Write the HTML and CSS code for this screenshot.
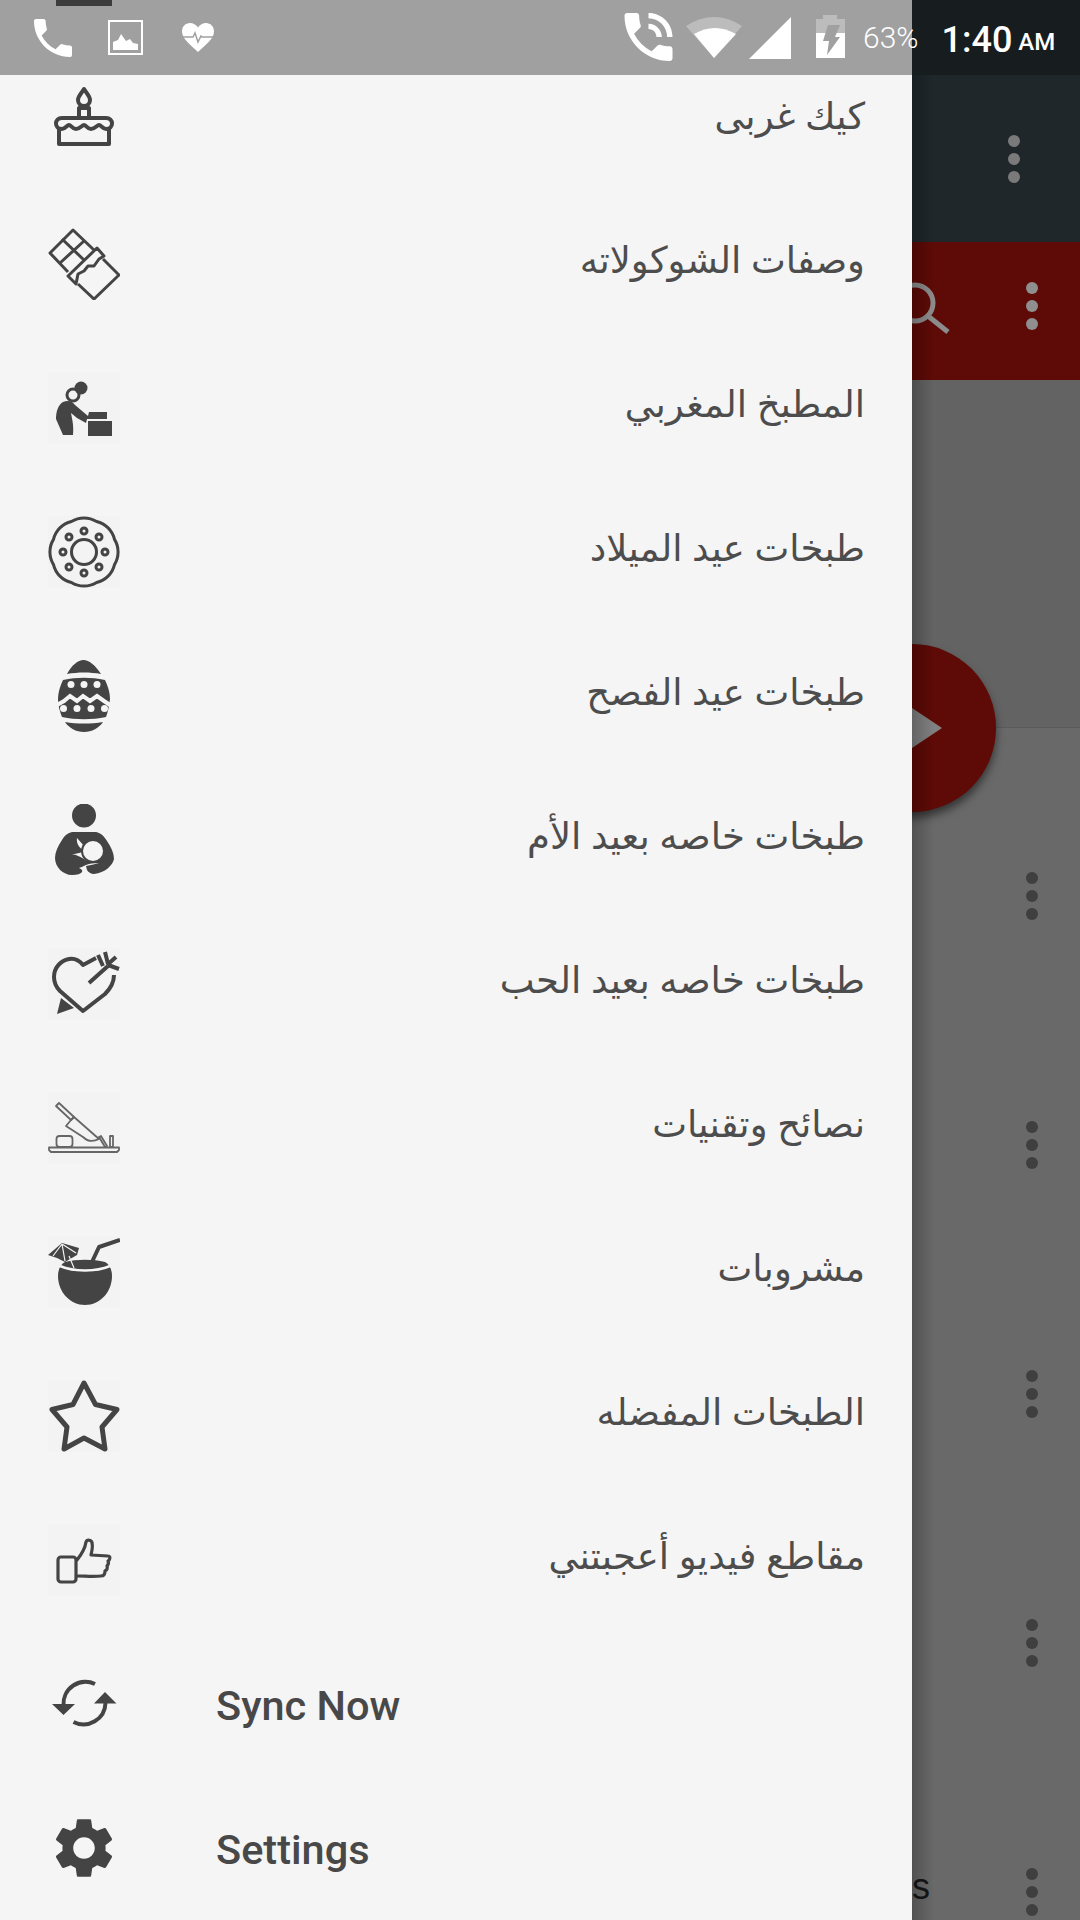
FILE: index.html
```html
<!DOCTYPE html>
<html lang="ar">
<head>
    <meta charset="UTF-8">
    <meta name="viewport" content="width=device-width, initial-scale=1.0">
    <title>Drawer</title>
    <link rel="stylesheet" href="styles.css">
</head>
<body>
    <div class="status-bar" dir="ltr">
        <div class="peek"></div>
        <svg class="st-phone" viewBox="3 3 18 18"><path d="M6.62 10.79c1.44 2.83 3.76 5.14 6.59 6.59l2.2-2.2c.27-.27.67-.36 1.02-.24 1.12.37 2.33.57 3.57.57.55 0 1 .45 1 1V20c0 .55-.45 1-1 1-9.39 0-17-7.61-17-17 0-.55.45-1 1-1h3.5c.55 0 1 .45 1 1 0 1.25.2 2.45.57 3.57.11.35.03.74-.25 1.02l-2.2 2.2z"/></svg>
        <svg class="st-image" viewBox="0 0 35 35"><path class="st-outline" d="M1 1h33v33H1z"/><path d="M5 30v-8l5-2 3-6 5 7 4-2 3 4 5 1v6z"/></svg>
        <svg class="st-heart" viewBox="0 0 32 29"><path d="M16 29C9 22 0 16 0 8.500 0 3.500 3.500 0 8 0c3.200 0 6 1.700 8 4.500C18 1.700 20.800 0 24 0c4.500 0 8 3.500 8 8.500C32 16 23 22 16 29z"/><path class="st-pulse" d="M0 14h11l2-4 3 9 3-6 1 1h12"/></svg>
        <svg class="st-call" viewBox="3 3 18 18"><path d="M20 15.500c-1.250 0-2.450-.2-3.570-.57-.35-.11-.74-.03-1.020.24l-2.200 2.200c-2.830-1.440-5.150-3.750-6.590-6.590l2.200-2.210c.28-.26.36-.65.25-1C8.700 6.450 8.500 5.250 8.500 4c0-.55-.45-1-1-1H4c-.55 0-1 .45-1 1 0 9.390 7.610 17 17 17 .55 0 1-.45 1-1v-3.500c0-.55-.45-1-1-1zM19 12h2c0-4.970-4.030-9-9-9v2c3.870 0 7 3.130 7 7zm-4 0h2c0-2.760-2.240-5-5-5v2c1.660 0 3 1.340 3 3z"/></svg>
        <svg class="st-wifi" viewBox="0 0 56 41"><path class="st-dim" d="M0 9Q28-9 56 9L28 41z"/><path d="M8 17Q29 5 50 17L28 41z"/></svg>
        <svg class="st-signal" viewBox="0 0 42 42"><path d="M42 0v42H0z"/></svg>
        <svg class="st-battery" viewBox="0 0 29 43"><path class="st-dim" d="M7 0h14v4h8v14H0V4h7z"/><path d="M0 18h29v25H0z"/><path class="st-bolt" d="M12 10h12l-5 12h5L11 40l2-14H7z"/></svg>
        <span class="st-level">63%</span>
        <span class="st-time">1:40</span>
        <span class="st-ampm">AM</span>
    </div>

    <nav class="drawer">
        <div class="row">
            <svg class="icon" viewBox="0 0 72 72"><g class="line"><path d="M36 5c-3 5-6 7-6 11a6 6 0 0 0 12 0c0-4-3-6-6-11z"/><path d="M31 33v-9h10v9"/><path d="M14 34h44c8 0 8 11 0 11-3 0-5-4-7-4s-4 4-8 4-5-4-7-4-4 4-8 4-5-4-7-4-4 4-7 4c-8 0-8-11 0-11z"/><path d="M11 44v16h50V44"/></g></svg>
            <span class="label">كيك غربى</span>
        </div>
        <div class="row">
            <svg class="icon" viewBox="0 0 72 72"><g class="line thin"><path d="M20 44 2 25 25 2 46 22"/><path d="M14 11l22 21M36 13 12 35"/><path d="M20 48 49 20l7 8-5 3-5 7-6 0-4 5-6 3-2 10z"/><path d="M30 56 46 71 71 47 55 31"/></g></svg>
            <span class="label">وصفات الشوكولاته</span>
        </div>
        <div class="row">
            <svg class="icon tint" viewBox="0 0 72 72"><circle class="line thin" cx="25" cy="23" r="6"/><circle class="solid" cx="33" cy="16" r="6.500"/><path class="solid" d="M15 30c5-2 9-1 12 3l13 11 1-4h18v7H39l-1 4-9-5-6-5c1 6 3 12 2 22H15L8 47c0-7 2-14 7-17z"/><path class="solid" d="M40 49h24v15H40z"/></svg>
            <span class="label">المطبخ المغربي</span>
        </div>
        <div class="row">
            <svg class="icon tint" viewBox="0 0 72 72"><g class="line thin"><path d="M66.500 23.400A24 24 0 0 0 48.600 5.500 24 24 0 0 0 23.400 5.500 24 24 0 0 0 5.500 23.400 24 24 0 0 0 5.500 48.600 24 24 0 0 0 23.400 66.500 24 24 0 0 0 48.600 66.500 24 24 0 0 0 66.500 48.600 24 24 0 0 0 66.500 23.400z"/><circle cx="36" cy="36" r="12.500"/><circle cx="36" cy="15" r="3"/><circle cx="51" cy="21" r="3"/><circle cx="57" cy="36" r="3"/><circle cx="51" cy="51" r="3"/><circle cx="36" cy="57" r="3"/><circle cx="21" cy="51" r="3"/><circle cx="15" cy="36" r="3"/><circle cx="21" cy="21" r="3"/></g></svg>
            <span class="label">طبخات عيد الميلاد</span>
        </div>
        <div class="row">
            <svg class="icon" viewBox="0 0 72 72"><g class="solid"><path d="M19 14C24 5 30 0 35.500 0S47 5 53 14c-11-2-23-2-34 0z"/><path d="M15 20c14-3 28-3 42 0 3 6 5 13 5 19-1 7-2 13-4 18-14 3-30 3-44 0-2-5-4-11-4-18 0-6 2-13 5-19z"/><path d="M17 62c12 2 26 2 38 0-4 6-11 10-19 10s-15-4-19-10z"/></g><g class="white"><circle cx="23" cy="24.500" r="3.500"/><circle cx="36" cy="24.500" r="3.500"/><circle cx="49" cy="24.500" r="3.500"/><circle cx="15.500" cy="48.500" r="3.500"/><circle cx="29" cy="48.500" r="3.500"/><circle cx="43" cy="48.500" r="3.500"/><circle cx="56.500" cy="48.500" r="3.500"/></g><path class="zig" d="M9 45l7-4 6-5 7 5 6-5 7 5 7-5 7 5 6 4"/></svg>
            <span class="label">طبخات عيد الفصح</span>
        </div>
        <div class="row">
            <svg class="icon" viewBox="0 0 72 72"><circle class="solid" cx="36" cy="11.500" r="12"/><path class="solid" d="M24 28h24c5 1 8 4 11 9 4 6 7 12 7 18-1 6-9 14-20 15-3 0-6-2-7-4l-1-4c5-1 10-2 13-3-12 0-14 3-20 5 6 2 4 7-7 7-9 0-17-8-17-17 0-6 3-12 7-18 3-5 6-7 10-8z"/><path class="white" d="M29 34c-1 6 3 11 8 13-4 1-7 3-13 3 5 1 11 4 15 7 3-2 4-4 6-5z"/><circle class="solid" cx="45" cy="47" r="12"/><circle class="white" cx="45" cy="47" r="10"/></svg>
            <span class="label">طبخات خاصه بعيد الأم</span>
        </div>
        <div class="row">
            <svg class="icon tint" viewBox="0 0 72 72"><g class="line"><path d="M48 10l-13 7c-4-5-9-7-14-6-9 2-15 9-15 18 0 5 2 10 6 14l23 20 22-17c6-6 9-13 9-19"/><path d="M41 35l19-17"/><path d="M50 7l5 11M57 4l3 12M68 9l-9 8M71 21l-11-4"/></g><path class="solid" d="M9 66l4-16 13 10z"/></svg>
            <span class="label">طبخات خاصه بعيد الحب</span>
        </div>
        <div class="row">
            <svg class="icon tint" viewBox="0 0 72 72"><g class="line hair"><path d="M1 55.500h70v2.500l-2 2H3l-2-2z"/><rect x="8.500" y="44" width="16" height="11" rx="3"/><path d="M8 14l3-3 15 14-3 3z"/><path d="M23 28l3-3 25 22c-6 3-12 2-16-2L18 34z"/><path d="M53 44l6 10-2 1-6-10zM62 44h3v11h-3z"/></g></svg>
            <span class="label">نصائح وتقنيات</span>
        </div>
        <div class="row">
            <svg class="icon tint" viewBox="0 0 72 72"><path class="solid" d="M10 40c0-7 3-12 7-14 12-3 28-3 40 0 4 2 7 7 7 14 0 16-12 29-27 29S10 56 10 40z"/><path class="rim" d="M12 30c14 6 36 6 50 0"/><path class="solid" d="M0 19 14 7l17 5-2 7-12 7-8-4z"/><path class="rib" d="M14 8l3 17M14 8 5 20M14 8l14 9M21 20l5 12"/><path class="line" d="M41 31l2-3 8-17 21-7"/></svg>
            <span class="label">مشروبات</span>
        </div>
        <div class="row">
            <svg class="icon tint" viewBox="0 0 72 72"><path class="line star" d="M36 3l11.500 21.500 21.500 5-15 17.500 3 22-21-11-20 11 3-22-15-17.500 21-5z"/></svg>
            <span class="label">الطبخات المفضله</span>
        </div>
        <div class="row">
            <svg class="icon tint" viewBox="0 0 72 72"><g class="line slim"><rect x="10" y="33" width="18" height="25" rx="3"/><path d="M29 36c4-5 8-11 9-18 1-3 6-2 6 1 1 4 0 8-1 12l17 1c3 0 2 4 0 5 1 2 0 4-1 5 1 2 0 4-2 5 0 3-1 5-4 5-8 1-16 0-24 0"/></g></svg>
            <span class="label">مقاطع فيديو أعجبتني</span>
        </div>
        <div class="row row-app">
            <svg class="icon" viewBox="0 0 72 72"><g class="line"><path d="M47 16A22 22 0 0 0 15.500 37"/><path d="M25.500 54A22 22 0 0 0 57.500 35"/></g><path class="solid" d="M4 36h23L15.500 47zM46 35.500 57 24l11.500 11.500z"/></svg>
            <span class="label-app">Sync Now</span>
        </div>
        <div class="row row-app">
            <svg class="icon" viewBox="0 0 24 24"><path class="solid" d="M19.140 12.940c.04-.3.06-.61.06-.94 0-.32-.02-.64-.07-.94l2.030-1.580c.18-.14.23-.41.12-.61l-1.920-3.320c-.12-.22-.37-.29-.59-.22l-2.390.96c-.5-.38-1.030-.7-1.620-.94l-.36-2.540c-.04-.24-.24-.41-.48-.41h-3.840c-.24 0-.43.17-.47.41l-.36 2.540c-.59.24-1.130.57-1.620.94l-2.390-.96c-.22-.08-.47 0-.59.22L2.740 8.870c-.12.21-.08.47.12.61l2.030 1.580c-.05.3-.09.63-.09.94s.02.64.07.94l-2.030 1.580c-.18.14-.23.41-.12.61l1.920 3.320c.12.22.37.29.59.22l2.390-.96c.5.38 1.030.7 1.620.94l.36 2.540c.05.24.24.41.48.41h3.840c.24 0 .44-.17.47-.41l.36-2.540c.59-.24 1.130-.56 1.620-.94l2.390.96c.22.08.47 0 .59-.22l1.920-3.320c.12-.22.07-.47-.12-.61l-2.010-1.580zM12 15.600c-1.980 0-3.600-1.620-3.600-3.600s1.620-3.600 3.600-3.600 3.600 1.620 3.600 3.600-1.620 3.600-3.600 3.600z"/></svg>
            <span class="label-app">Settings</span>
        </div>
    </nav>

    <div class="side">
        <div class="side-top">
            <div class="dots"><i></i><i></i><i></i></div>
        </div>
        <div class="side-red">
            <svg class="search" viewBox="0 0 60 60"><circle cx="23" cy="22" r="18"/><path d="M36 35l20 16"/></svg>
            <div class="dots"><i></i><i></i><i></i></div>
        </div>
        <div class="side-hero"></div>
        <div class="side-list">
            <div class="side-row"><div class="dots"><i></i><i></i><i></i></div></div>
            <div class="side-row"><div class="dots"><i></i><i></i><i></i></div></div>
            <div class="side-row"><div class="dots"><i></i><i></i><i></i></div></div>
            <div class="side-row"><div class="dots"><i></i><i></i><i></i></div></div>
            <div class="side-row"><span class="side-text">s</span><div class="dots"><i></i><i></i><i></i></div></div>
        </div>
    </div>

    <div class="fab"><svg viewBox="0 0 60 80"><path d="M0 0 60 40 0 80z"/></svg></div>
</body>
</html>
```

FILE: styles.css
```css
* {
    margin: 0;
    padding: 0;
    box-sizing: border-box;
}

html, body {
    width: 1080px;
    height: 1920px;
    overflow: hidden;
}

body {
    display: flex;
    position: relative;
    font-family: "Noto Sans", "DejaVu Sans", sans-serif;
    background: #666;
}

/* status bar */
.status-bar {
    position: absolute;
    top: 0;
    left: 0;
    width: 1080px;
    height: 75px;
    z-index: 5;
    display: flex;
    align-items: flex-start;
    background: linear-gradient(to right, #a0a0a0 912px, #171c1f 912px);
    color: #fff;
    font-family: Roboto, sans-serif;
}

.status-bar svg {
    flex: none;
    fill: #fff;
}

.peek {
    position: absolute;
    top: 0;
    left: 56px;
    width: 56px;
    height: 6px;
    background: #3c3c3c;
}

.st-phone { width: 38px; height: 38px; margin: 19px 0 0 34px; }
.st-image { width: 35px; height: 35px; margin: 20px 0 0 36px; }
.st-heart { width: 32px; height: 29px; margin: 23px 0 0 39px; }
.st-call { width: 51px; height: 48px; margin: 13px 0 0 409px; }
.st-wifi { width: 56px; height: 41px; margin: 17px 0 0 12px; }
.st-signal { width: 42px; height: 42px; margin: 17px 0 0 7px; }
.st-battery { width: 29px; height: 43px; margin: 15px 0 0 25px; }

.status-bar .st-outline { fill: none; stroke: #fff; stroke-width: 2; }
.status-bar .st-pulse { fill: none; stroke: #a0a0a0; stroke-width: 1.5; }
.status-bar .st-dim { fill: rgba(255,255,255,0.3); }
.status-bar .st-bolt { fill: #a0a0a0; }

.st-level {
    margin: 18px 0 0 18px;
    font-size: 30px;
    font-weight: 300;
    line-height: 40px;
}

.st-time {
    margin: 20px 0 0 23px;
    font-size: 36px;
    font-weight: 500;
    line-height: 40px;
}

.st-ampm {
    margin: 26px 0 0 6px;
    font-size: 24px;
    font-weight: 500;
    line-height: 32px;
}

/* drawer */
.drawer {
    width: 912px;
    flex: none;
    height: 1920px;
    padding-top: 48px;
    background: #f5f5f5;
    position: relative;
    z-index: 3;
}

.row {
    height: 144px;
    display: flex;
    align-items: center;
    justify-content: space-between;
    padding: 0 47px 0 48px;
}

.icon {
    width: 72px;
    height: 72px;
    flex: none;
}

.tint {
    background: #f3f3f3;
}

.label {
    direction: rtl;
    font-size: 37px;
    color: #4d4d4d;
    line-height: 48px;
    margin-bottom: 10px;
}

.row-app {
    justify-content: flex-start;
}

.label-app {
    margin-left: 96px;
    margin-top: 2px;
    font-family: Roboto, sans-serif;
    font-size: 41.500px;
    font-weight: 500;
    color: #484848;
}

.line {
    fill: none;
    stroke: #444;
    stroke-width: 4;
    stroke-linejoin: round;
}

.line path, .line circle, .line rect { fill: none; }
.thin { stroke-width: 3; }
.hair { stroke: #666; stroke-width: 1.8; }
.slim { stroke-width: 3.200; stroke-linecap: round; }
.star { stroke-width: 5; }
.solid { fill: #444; }
.white { fill: #f5f5f5; }
.zig { fill: none; stroke: #f5f5f5; stroke-width: 4; }
.rim { fill: none; stroke: #f5f5f5; stroke-width: 2.500; }
.rib { fill: none; stroke: #f3f3f3; stroke-width: 1.2; }

/* app behind the drawer */
.side {
    flex: 1;
    position: relative;
    display: flex;
    flex-direction: column;
    height: 1920px;
}

.side::before {
    content: "";
    position: absolute;
    top: 0;
    left: 0;
    width: 22px;
    height: 100%;
    background: linear-gradient(to right, rgba(0,0,0,0.22), rgba(0,0,0,0));
    z-index: 2;
}

.dots {
    display: flex;
    flex-direction: column;
    gap: 6px;
    flex: none;
}

.dots i {
    display: block;
    width: 12px;
    height: 12px;
    border-radius: 50%;
    background: #7a7a7a;
}

.side-top {
    flex: none;
    height: 242px;
    background: #1f272b;
    padding: 135px 0 0 96px;
}

.side-red {
    flex: none;
    height: 138px;
    background: #5e0a06;
    display: flex;
    align-items: flex-start;
    justify-content: space-between;
    padding: 39px 42px 0 0;
}

.side-red .dots { margin-top: 1px; }
.side-red .dots i { background: #8f8f8f; }

.search {
    width: 60px;
    height: 60px;
    margin-left: -20px;
    fill: none;
    stroke: #8c8c8c;
    stroke-width: 5;
}

.side-hero {
    flex: none;
    height: 348px;
    background: #636363;
    border-bottom: 1px solid #5a5a5a;
}

.side-list {
    flex: none;
    height: 1192px;
    background: #696969;
    padding-top: 43px;
    overflow: hidden;
}

.side-row {
    height: 249px;
    display: flex;
    align-items: center;
    justify-content: flex-end;
    padding-right: 42px;
    position: relative;
}

.side-row .dots i { background: #3f3f3f; }

.side-text {
    position: absolute;
    left: 0;
    top: 99px;
    font-family: "Liberation Sans", sans-serif;
    font-size: 36px;
    color: #161616;
}

.fab {
    position: absolute;
    left: 828px;
    top: 644px;
    width: 168px;
    height: 168px;
    border-radius: 50%;
    background: #5e0a06;
    box-shadow: 0 6px 8px rgba(0,0,0,0.5);
    z-index: 1;
    display: flex;
    align-items: center;
    padding-left: 54px;
}

.fab svg {
    width: 60px;
    height: 80px;
    fill: #808080;
}
```
